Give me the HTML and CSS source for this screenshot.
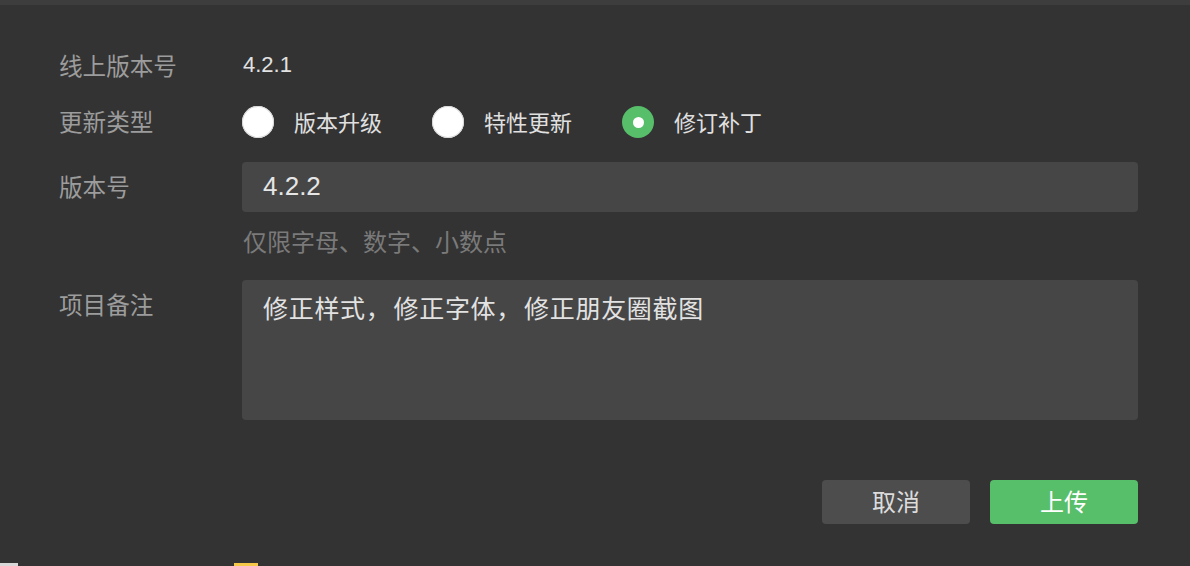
FILE: index.html
```html
<!DOCTYPE html>
<html lang="zh-CN">
<head>
<meta charset="utf-8">
<title>上传</title>
<link rel="stylesheet" href="styles.css">
</head>
<body>
<div class="topbar"></div>
<div class="form">
  <div class="row row-plain">
    <div class="label">线上版本号</div>
    <div class="value">4.2.1</div>
  </div>
  <div class="row row-radios">
    <div class="label">更新类型</div>
    <div class="radios">
      <label class="radio"><span class="dot"></span><span class="rtext">版本升级</span></label>
      <label class="radio"><span class="dot"></span><span class="rtext">特性更新</span></label>
      <label class="radio"><span class="dot checked"></span><span class="rtext">修订补丁</span></label>
    </div>
  </div>
  <div class="row row-input">
    <div class="label">版本号</div>
    <div class="input">4.2.2</div>
  </div>
  <div class="row row-hint">
    <div></div>
    <div class="hint">仅限字母、数字、小数点</div>
  </div>
  <div class="row row-area">
    <div class="label label-top">项目备注</div>
    <div class="area">修正样式<span class="comma">，</span>修正字体<span class="comma">，</span>修正朋友圈截图</div>
  </div>
  <div class="actions">
    <button class="btn btn-cancel">取消</button>
    <button class="btn btn-ok">上传</button>
  </div>
</div>
<div class="peek">
  <span class="pk pk-white"></span>
  <span class="pk pk-gap1"></span>
  <span class="pk pk-yellow"></span>
</div>
</body>
</html>
```
FILE: styles.css
```css
* { box-sizing: border-box; }
html, body {
  margin: 0;
  padding: 0;
  background: #333333;
  width: 1190px;
  height: 566px;
  overflow: hidden;
  font-family: "Noto Sans CJK SC", "Noto Sans", sans-serif;
}
.topbar {
  height: 5px;
  background: #3d3d3d;
}
.form {
  padding: 41px 52px 0 59px;
  height: 558px;
}
.row {
  display: grid;
  grid-template-columns: 183px 896px;
  align-items: center;
}
.row-plain { height: 40px; }
.row-radios { height: 40px; margin-top: 16px; }
.row-input { margin-top: 20px; }
.row-hint { margin-top: 12px; height: 36px; }
.row-area { margin-top: 20px; align-items: start; }
.label {
  color: #9c9c9c;
  font-size: 23.6px;
  line-height: 30px;
  padding-bottom: 3px;
}
.label-top { padding-top: 9px; padding-bottom: 0; }
.value {
  color: #e2e2e2;
  font-size: 22px;
  line-height: 30px;
  font-family: "Liberation Sans", "Noto Sans CJK SC", sans-serif;
  padding-left: 1px;
  padding-bottom: 2px;
}
.radios {
  display: flex;
  align-items: center;
}
.radio {
  display: flex;
  align-items: center;
  margin-right: 50px;
}
.dot {
  width: 32px;
  height: 32px;
  border-radius: 50%;
  background: #ffffff;
  box-shadow: inset 0 0 0 1px #d8d8d8;
  display: flex;
  align-items: center;
  justify-content: center;
}
.dot.checked {
  background: #57be6a;
  box-shadow: none;
}
.dot.checked::after {
  content: "";
  width: 11px;
  height: 11px;
  border-radius: 50%;
  background: #ffffff;
}
.rtext {
  margin-left: 20px;
  color: #e0e0e0;
  font-size: 22px;
  line-height: 30px;
  padding-bottom: 3px;
}
.input {
  height: 50px;
  background: #464646;
  border-radius: 4px;
  padding: 0 21px 2px;
  color: #e6e6e6;
  font-size: 26px;
  line-height: 48px;
  font-family: "Liberation Sans", "Noto Sans CJK SC", sans-serif;
}
.hint {
  color: #7a7a7a;
  font-size: 24px;
  line-height: 32px;
  padding-left: 1px;
  padding-bottom: 2px;
}
.area {
  height: 140px;
  background: #464646;
  border-radius: 4px;
  padding: 11px 21px;
  color: #e2e2e2;
  font-size: 25px;
  line-height: 32px;
  letter-spacing: 0.7px;
}
.comma { margin-right: 2px; }
.actions {
  display: flex;
  justify-content: flex-end;
  gap: 20px;
  margin-top: 60px;
}
.btn {
  width: 148px;
  height: 44px;
  border: none;
  border-radius: 4px;
  font-family: "Noto Sans CJK SC", sans-serif;
  font-size: 24px;
  line-height: 42px;
  padding: 0 0 2px;
}
.btn-cancel { background: #4d4d4d; color: #dcdcdc; }
.btn-ok { background: #57be6a; color: #ffffff; }
.peek {
  display: flex;
  height: 3px;
}
.pk { display: block; height: 3px; }
.pk-white { width: 18px; background: #d8d8d8; }
.pk-gap1 { width: 216px; }
.pk-yellow { width: 24px; background: #f5c84a; }
```
